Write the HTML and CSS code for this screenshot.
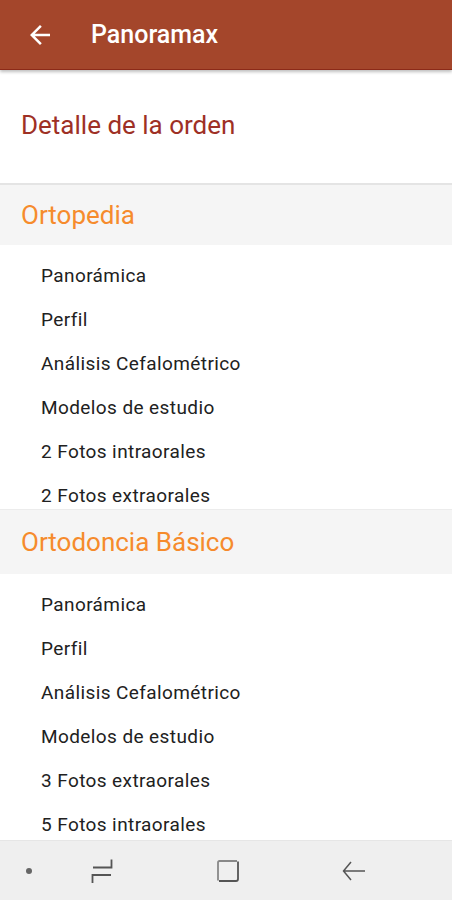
FILE: index.html
```html
<!DOCTYPE html>
<html lang="es">
<head>
    <meta charset="UTF-8">
    <meta name="viewport" content="width=device-width, initial-scale=1.0">
    <title>Panoramax</title>
    <link rel="stylesheet" href="styles.css">
</head>
<body>
    <div class="screen">
        <!-- Top app bar -->
        <header class="app-bar">
            <svg class="back-icon" width="30" height="30" viewBox="0 0 24 24">
                <path d="M20 11H7.83l5.59-5.59L12 4l-8 8 8 8 1.41-1.41L7.83 13H20v-2z" fill="#fff"/>
            </svg>
            <span class="app-title">Panoramax</span>
        </header>

        <main class="content">
            <h1 class="page-title">Detalle de la orden</h1>

            <section class="group">
                <h2 class="group-title">Ortopedia</h2>
                <ul class="items">
                    <li>Panorámica</li>
                    <li>Perfil</li>
                    <li>Análisis Cefalométrico</li>
                    <li>Modelos de estudio</li>
                    <li>2 Fotos intraorales</li>
                    <li>2 Fotos extraorales</li>
                </ul>
            </section>

            <section class="group">
                <h2 class="group-title tall">Ortodoncia Básico</h2>
                <ul class="items">
                    <li>Panorámica</li>
                    <li>Perfil</li>
                    <li>Análisis Cefalométrico</li>
                    <li>Modelos de estudio</li>
                    <li>3 Fotos extraorales</li>
                    <li>5 Fotos intraorales</li>
                </ul>
            </section>
        </main>

        <!-- System navigation bar -->
        <nav class="nav-bar">
            <span class="nav-dot"></span>
            <svg class="nav-icon recent" width="30" height="30" viewBox="0 0 30 30">
                <path d="M6 11.5H24.5V3.5M24 19H5.5V27" fill="none" stroke="#555" stroke-width="1.8"/>
            </svg>
            <svg class="nav-icon home" width="30" height="30" viewBox="0 0 30 30">
                <path d="M5 24.5V6.5Q5 5 6.5 5H24" fill="none" stroke="#888" stroke-width="1.8"/>
                <path d="M25 5.5V23Q25 25 23 25H6" fill="none" stroke="#555" stroke-width="1.8"/>
            </svg>
            <svg class="nav-icon back" width="30" height="30" viewBox="0 0 30 30">
                <path d="M26 15H4.5M12 6L4.5 15 12 24" fill="none" stroke="#555" stroke-width="1.5"/>
            </svg>
        </nav>
    </div>
</body>
</html>
```

FILE: styles.css
```css
/* Base */
body {
    margin: 0;
    font-family: 'Roboto', 'Noto Sans', sans-serif;
    background: #fff;
}

.screen {
    width: 452px;
    height: 900px;
    display: flex;
    flex-direction: column;
    overflow: hidden;
}

/* App bar */
.app-bar {
    height: 70px;
    flex-shrink: 0;
    display: flex;
    align-items: center;
    background-color: #a4462b;
    box-shadow: 0 2px 3px rgba(0, 0, 0, 0.25);
    border-bottom: 1px solid #8c2a18;
    box-sizing: border-box;
    position: relative;
    z-index: 1;
}

.back-icon {
    margin-left: 25px;
}

.app-title {
    margin-left: 36px;
    color: #fff;
    font-size: 25px;
    font-weight: 500;
}

/* Content */
.content {
    flex: 1;
    overflow: hidden;
}

.page-title {
    margin: 0;
    height: 113px;
    padding: 0 21px 3px;
    display: flex;
    align-items: center;
    box-sizing: border-box;
    font-size: 26px;
    font-weight: 400;
    color: #9e3025;
}

.group-title {
    margin: 0;
    height: 62px;
    padding: 0 21px;
    display: flex;
    align-items: center;
    box-sizing: border-box;
    background-color: #f5f5f5;
    border-top: 2px solid #e4e4e4;
    font-size: 26px;
    font-weight: 400;
    color: #f68b2c;
}

.group-title.tall {
    height: 65px;
    border-top-width: 1px;
    border-top-color: #ececec;
}

.items {
    list-style: none;
    margin: 0;
    padding: 0;
}

.items li {
    height: 44px;
    padding: 20px 0 0 41px;
    box-sizing: border-box;
    line-height: 22px;
    font-size: 19px;
    letter-spacing: 0.4px;
    color: #212121;
}

/* Navigation bar */
.nav-bar {
    height: 60px;
    flex-shrink: 0;
    display: flex;
    align-items: center;
    background-color: #efefef;
    border-top: 1px solid #e6e6e6;
    box-sizing: border-box;
}

.nav-dot {
    width: 6px;
    height: 6px;
    border-radius: 50%;
    background: #666;
    margin-left: 26px;
}

.nav-icon.recent {
    margin-left: 55px;
}

.nav-icon.home {
    margin-left: 96px;
}

.nav-icon.back {
    margin-left: 96px;
}
```
